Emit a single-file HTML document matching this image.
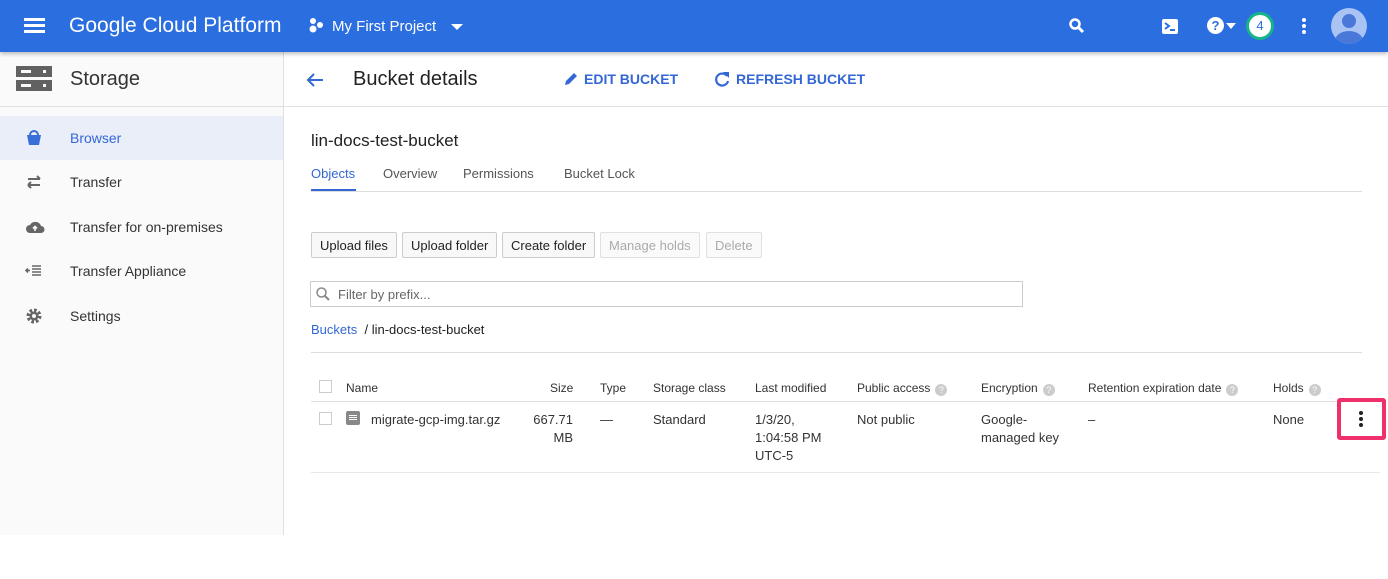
<!DOCTYPE html>
<html><head><meta charset="utf-8"><style>
*{box-sizing:border-box;margin:0;padding:0}
body{width:1388px;height:579px;overflow:hidden;background:#fff;font-family:"Liberation Sans",Arial,sans-serif;color:#212121;position:relative}
.top{position:absolute;left:0;top:0;width:1388px;height:52px;background:#2a6ee0;box-shadow:0 2px 4px rgba(0,0,0,.25);z-index:2;color:#fff}
.abs{position:absolute}
.side{position:absolute;left:0;top:52px;width:284px;height:483px;background:#fafafa;border-right:1px solid #e0e0e0}
.sh{height:55px;border-bottom:1px solid #e0e0e0;position:relative}
.nav{position:absolute;left:0;width:283px;height:44px;font-size:14px;color:#333}
.nav span{position:absolute;left:70px;top:14px}
.nav svg{position:absolute;left:25px;top:13px}
.btn{position:absolute;top:232px;height:26px;border:1px solid #ccc;background:#f8f8f8;font-size:13px;padding:5px 8px 0;color:#222;border-radius:2px}
.dis{color:#aaa;border-color:#e0e0e0;background:#fafafa}
.th{position:absolute;top:381px;font-size:12px;color:#333}
.td{position:absolute;top:411px;font-size:13px;color:#333;line-height:18px}
.q{display:inline-block;width:12px;height:12px;border-radius:50%;background:#ccc;color:#fff;font-size:9px;text-align:center;line-height:12px;margin-left:5px;vertical-align:-1px}
.cb{position:absolute;width:13px;height:13px;border:1px solid #ccc;background:#fff}
</style></head><body>
<div class="top">
 <div class="abs" style="left:24px;top:18px;width:21px;height:3px;background:#fff;box-shadow:0 6px 0 #fff,0 12px 0 #fff"></div>
 <div class="abs" style="left:69px;top:14px;font-size:21px">Google Cloud Platform</div>
 <svg class="abs" style="left:308px;top:17px" width="18" height="18"><circle cx="5" cy="4" r="3" fill="#fff"/><circle cx="5" cy="12" r="3.5" fill="#fff"/><circle cx="12" cy="8" r="3" fill="#fff"/></svg>
 <div class="abs" style="left:332px;top:18px;font-size:15px">My First Project</div>
 <div class="abs" style="left:451px;top:24px;border:6px solid transparent;border-top:6px solid #fff;border-bottom:0"></div>
 <svg class="abs" style="left:1068px;top:17px" width="18" height="18"><circle cx="7" cy="7" r="4.5" stroke="#fff" stroke-width="2.5" fill="none"/><path d="M10 10l5 5" stroke="#fff" stroke-width="3"/></svg>
 <div class="abs" style="left:1162px;top:19px;width:16px;height:15px;background:#fff;border-radius:2px"><svg width="16" height="15"><path d="M3 4l4 3-4 3" stroke="#2a6ee0" stroke-width="2" fill="none"/><path d="M8 11h5" stroke="#2a6ee0" stroke-width="2"/></svg></div>
 <div class="abs" style="left:1207px;top:17px;width:17px;height:17px;border-radius:50%;background:#fff;color:#2a6ee0;font-weight:bold;font-size:13px;text-align:center;line-height:17px">?</div>
 <div class="abs" style="left:1226px;top:23px;border:5px solid transparent;border-top:6px solid #fff;border-bottom:0"></div>
 <div class="abs" style="left:1246px;top:12px;width:28px;height:28px;border-radius:50%;background:#fff;border:3px solid #19b38a;color:#2a6ee0;font-size:13px;text-align:center;line-height:22px">4</div>
 <div class="abs" style="left:1302px;top:18px;width:4px;height:4px;border-radius:50%;background:#fff;box-shadow:0 6px 0 #fff,0 12px 0 #fff"></div>
 <div class="abs" style="left:1331px;top:8px;width:36px;height:36px;border-radius:50%;background:#a9c3f4;overflow:hidden"><div class="abs" style="left:11px;top:6px;width:14px;height:14px;border-radius:50%;background:#4a78d8"></div><div class="abs" style="left:4px;top:23px;width:28px;height:20px;border-radius:50%;background:#4a78d8"></div></div>
</div>
<div class="side">
 <div class="sh">
  <div class="abs" style="left:16px;top:14px;width:36px;height:11px;background:#616161"></div>
  <div class="abs" style="left:16px;top:28px;width:36px;height:11px;background:#616161"></div>
  <div class="abs" style="left:21px;top:18px;width:10px;height:3px;background:#fafafa;box-shadow:0 14px 0 #fafafa"></div>
  <div class="abs" style="left:43px;top:18px;width:3px;height:3px;background:#fafafa;box-shadow:0 14px 0 #fafafa"></div>
  <div class="abs" style="left:70px;top:16px;font-size:20px;color:#333">Storage</div>
 </div>
 <div class="nav" style="top:64px;background:#e9eef8"><svg width="18" height="18"><path d="M2 6h14l-2 10H4z" fill="#3a6fd8"/><path d="M5 6a4 4 0 0 1 8 0" stroke="#3a6fd8" stroke-width="2" fill="none"/></svg><span style="color:#3367d6">Browser</span></div>
 <div class="nav" style="top:108px"><svg width="18" height="18"><path d="M3 6h12M12 3l3 3M15 12H3M6 9l-3 3M6 15l-3-3" stroke="#666" stroke-width="2" fill="none"/></svg><span>Transfer</span></div>
 <div class="nav" style="top:153px"><svg width="20" height="18"><path d="M5 15a4 4 0 0 1 0-8 6 6 0 0 1 11 1 3.5 3.5 0 0 1 0 7z" fill="#666"/><path d="M10 13V9M8 10.5l2-2 2 2" stroke="#fafafa" stroke-width="1.6" fill="none"/></svg><span>Transfer for on-premises</span></div>
 <div class="nav" style="top:197px"><svg width="18" height="18"><path d="M7 4h9M7 7h9M7 10h9M7 13h9M1 8.5h4M3 6.5l-2 2 2 2" stroke="#666" stroke-width="1.6" fill="none"/></svg><span>Transfer Appliance</span></div>
 <div class="nav" style="top:242px"><svg width="18" height="18"><circle cx="9" cy="9" r="5.5" fill="none" stroke="#666" stroke-width="4" stroke-dasharray="2.5 1.8"/><circle cx="9" cy="9" r="4.5" fill="#666"/><circle cx="9" cy="9" r="2" fill="#fafafa"/></svg><span>Settings</span></div>
</div>
<div class="abs" style="left:284px;top:106px;width:1104px;height:1px;background:#e0e0e0"></div>
<svg class="abs" style="left:305px;top:71px" width="20" height="18"><path d="M18 9H3M9 3L3 9l6 6" stroke="#3367d6" stroke-width="2" fill="none"/></svg>
<div class="abs" style="left:353px;top:68px;font-size:20px;color:#222">Bucket details</div>
<svg class="abs" style="left:562px;top:70px" width="18" height="18"><path d="M3 15l1-4 8-8 3 3-8 8z" fill="#3367d6"/></svg>
<div class="abs" style="left:584px;top:71px;font-size:14px;font-weight:bold;color:#3367d6">EDIT BUCKET</div>
<svg class="abs" style="left:713px;top:70px" width="18" height="18"><path d="M14 6A6 6 0 1 0 15 11" stroke="#3367d6" stroke-width="2.2" fill="none"/><path d="M10 2h6v6z" fill="#3367d6"/></svg>
<div class="abs" style="left:736px;top:71px;font-size:14px;font-weight:bold;color:#3367d6">REFRESH BUCKET</div>
<div class="abs" style="left:311px;top:131px;font-size:17px">lin-docs-test-bucket</div>
<div class="abs" style="left:311px;top:166px;font-size:13px;color:#3367d6">Objects</div>
<div class="abs" style="left:383px;top:166px;font-size:13px;color:#555">Overview</div>
<div class="abs" style="left:463px;top:166px;font-size:13px;color:#555">Permissions</div>
<div class="abs" style="left:564px;top:166px;font-size:13px;color:#555">Bucket Lock</div>
<div class="abs" style="left:311px;top:191px;width:1051px;height:1px;background:#ddd"></div>
<div class="abs" style="left:311px;top:189px;width:45px;height:2px;background:#3367d6"></div>
<div class="btn" style="left:311px">Upload files</div>
<div class="btn" style="left:402px">Upload folder</div>
<div class="btn" style="left:502px">Create folder</div>
<div class="btn dis" style="left:600px">Manage holds</div>
<div class="btn dis" style="left:706px">Delete</div>
<div class="abs" style="left:310px;top:281px;width:713px;height:26px;border:1px solid #ccc"></div>
<svg class="abs" style="left:315px;top:286px" width="16" height="16"><circle cx="6.5" cy="6.5" r="4.5" stroke="#888" stroke-width="1.5" fill="none"/><path d="M10 10l4 4" stroke="#888" stroke-width="2"/></svg>
<div class="abs" style="left:338px;top:287px;font-size:13px;color:#666">Filter by prefix...</div>
<div class="abs" style="left:311px;top:322px;font-size:13px"><span style="color:#3367d6">Buckets</span>&nbsp; / lin-docs-test-bucket</div>
<div class="abs" style="left:311px;top:352px;width:1051px;height:1px;background:#ddd"></div>
<div class="cb" style="left:319px;top:380px"></div>
<div class="th" style="left:346px">Name</div>
<div class="th" style="left:550px">Size</div>
<div class="th" style="left:600px">Type</div>
<div class="th" style="left:653px">Storage class</div>
<div class="th" style="left:755px">Last modified</div>
<div class="th" style="left:857px">Public access<span class="q">?</span></div>
<div class="th" style="left:981px">Encryption<span class="q">?</span></div>
<div class="th" style="left:1088px">Retention expiration date<span class="q">?</span></div>
<div class="th" style="left:1273px">Holds<span class="q">?</span></div>
<div class="abs" style="left:311px;top:401px;width:1069px;height:1px;background:#e0e0e0"></div>
<div class="cb" style="left:319px;top:412px"></div>
<div class="abs" style="left:346px;top:411px;width:14px;height:14px;background:#888;border-radius:2px"><div style="margin:4px 3px;height:1px;background:#fff;box-shadow:0 2px 0 #fff,0 4px 0 #fff"></div></div>
<div class="td" style="left:371px">migrate-gcp-img.tar.gz</div>
<div class="td" style="left:530px;text-align:right;width:43px">667.71<br>MB</div>
<div class="td" style="left:600px">—</div>
<div class="td" style="left:653px">Standard</div>
<div class="td" style="left:755px">1/3/20,<br>1:04:58 PM<br>UTC-5</div>
<div class="td" style="left:857px">Not public</div>
<div class="td" style="left:981px">Google-<br>managed key</div>
<div class="td" style="left:1088px">–</div>
<div class="td" style="left:1273px">None</div>
<div class="abs" style="left:1337px;top:398px;width:49px;height:42px;border:4px solid #f0306a;border-radius:3px"></div>
<div class="abs" style="left:1359px;top:411px;width:4px;height:4px;border-radius:50%;background:#222;box-shadow:0 6px 0 #222,0 12px 0 #222"></div>
<div class="abs" style="left:311px;top:472px;width:1069px;height:1px;background:#e8e8e8"></div>
</body></html>
